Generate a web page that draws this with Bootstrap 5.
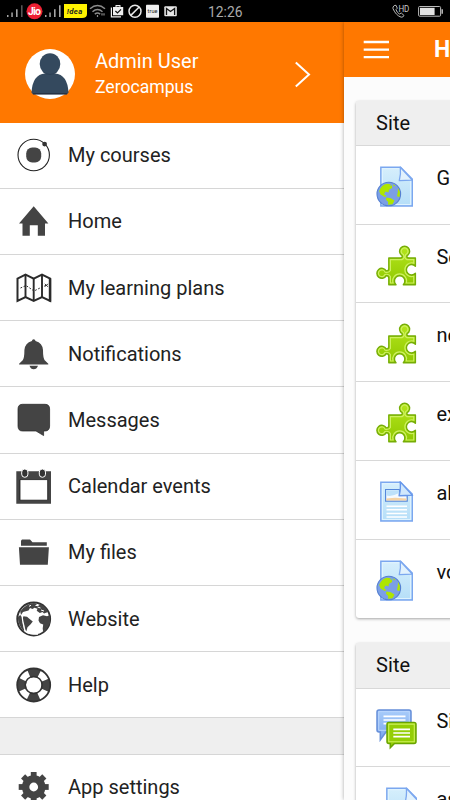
<!DOCTYPE html>
<html lang="en">
<head>
<meta charset="utf-8">
<meta name="viewport" content="width=device-width, initial-scale=1">
<title>Zerocampus</title>
<link href="https://cdn.jsdelivr.net/npm/bootstrap@5.3.0/dist/css/bootstrap.min.css" rel="stylesheet">
<style>
body{font-family:Roboto,"Liberation Sans",sans-serif;color:#222;width:450px;height:800px;line-height:1.2}
svg{display:block;flex:none}
svg text{font-family:Roboto,sans-serif}
.status{height:22px;background:#000}
.side{width:344px}
.profile{height:100.5px;background:#ff7800;padding:3px 32px 0 25px;gap:20px}
.profile-name{font-size:20px;line-height:26px}
.profile-site{font-size:17.6px;line-height:26px}
.menu-row{height:66.22px;border-bottom:1px solid #d6d6d6;padding:0 16px;gap:16px;font-size:20px;background:#fff}
.menu-gap{height:36.3px;background:#efefef;border-bottom:1px solid #d6d6d6}
.page-pane{width:106px;background:#fcfcfc;box-shadow:0 0 4px rgba(0,0,0,.35);z-index:1}
.topbar{height:55px;background:#ff7800;padding:1px 0 0 19px;gap:44px;font-size:23px}
.site-card{width:160px;margin:23.5px 0 0 12px;border-radius:3px;background:#fff;box-shadow:0 1px 3px rgba(0,0,0,.35)}
.site-card + .site-card{margin-top:25px}
.site-head{height:45.3px;background:#efefef;border-bottom:1px solid #d8d8d8;padding-left:20px;font-size:20px;letter-spacing:.1px;color:#111}
.site-row{height:78.75px;border-bottom:1px solid #d8d8d8;padding:20px 0 0 20px;gap:19.4px;font-size:20px;color:#111}
.site-row:last-child{border-bottom:0}
</style>
<script src="https://cdn.jsdelivr.net/npm/bootstrap@5.3.0/dist/js/bootstrap.bundle.min.js"></script>
</head>
<body class="overflow-hidden d-flex flex-column">
<svg width="0" height="0" class="position-absolute">
<defs>
<linearGradient id="gp" x2="0" y2="1"><stop stop-color="#b5e61d"/><stop offset="1" stop-color="#8fc800"/></linearGradient>
<linearGradient id="gf" x2="0" y2="1"><stop stop-color="#d6effc"/><stop offset="1" stop-color="#b5def8"/></linearGradient>
<linearGradient id="gb" x2="0" y2="1"><stop stop-color="#a9cdfb"/><stop offset="1" stop-color="#78a4ec"/></linearGradient>
<symbol id="sheet" viewBox="0 0 41 41">
<path d="M4.9 1.2H24.5L36.2 13V40H4.9Z" fill="url(#gf)" stroke="#7ba7ef" stroke-width="1.6"/>
<path d="M6.4 2.7H23L34.7 14.5V38.5H6.4Z" fill="none" stroke="#dff3fe" stroke-width="1.2"/>
<path d="M24.3 1.2L36.2 14.1L23.3 14.6Q25 8 24.3 1.2Z" fill="#e2f2fd" stroke="#7ba7ef" stroke-width="1.3" stroke-linejoin="round"/>
</symbol>
<symbol id="weblink" viewBox="0 0 41 41">
<use href="#sheet" width="41" height="41"/>
<circle cx="12.8" cy="28" r="11.8" fill="#7b9fe6" stroke="#5580d2" stroke-width="1.1"/>
<path d="M3.2 25Q5.5 18.5 11 17.7L14.8 18.2L13.5 20L16 19.3L16.2 22L13 23.8L12.5 26.5L9.5 25.4L8 28.2L10.5 30L8.7 31L4.5 28.5ZM10.5 31.5L14.8 32.3L18.5 34.5L16.5 38.2L12 38.8L12.2 36L9.8 33.5ZM22 22L24 26L23.6 31L21 30.3L21.8 26ZM17 18.2L19.4 19.7L17.8 20.6Z" fill="#aee600"/>
</symbol>
<symbol id="puzzle" viewBox="0 0 41 41">
<path d="M12.8 13H24.5Q27 12.6 26 10.5A5 5 0 1 1 31.2 10.5Q30.2 12.6 32.5 13H39.4V21.2A5.2 5.2 0 1 0 39.4 28.3V39.7H27.3A5.2 5.2 0 1 0 20 39.7H12.8V33Q12.4 30.3 10.2 30.8A5 5 0 1 1 10.2 25.8Q12.4 26.2 12.8 23.5Z" fill="url(#gp)" stroke="#76ad06" stroke-width="1.4" stroke-linejoin="round"/>
<path d="M14.4 14.6H26Q29.2 13.5 27.4 9.5A3.4 3.4 0 1 1 29.8 9.5Q28 13.5 31 14.6H37.8V18.1A6.9 6.9 0 1 0 37.8 31.3V38H30.2A6.9 6.9 0 1 0 17.1 38H14.4V31.5Q13 28.5 9 29.5A3.4 3.4 0 1 1 9 27.1Q13 28 14.4 25.5Z" fill="none" stroke="#cdf060" stroke-width="1.2"/>
</symbol>
<symbol id="article" viewBox="0 0 41 41">
<use href="#sheet" width="41" height="41"/>
<path d="M9.6 8.5H23.3V14.6H31.2V20.2H9.6Z" fill="#f4faff" stroke="#5588da" stroke-width="1.2"/>
<path d="M10.3 17.5L19 16.7L30.5 17.6V19.6H10.3Z" fill="#f5d3a5"/><path d="M10.3 9.2H23V12Q16 16 10.3 14.5Z" fill="#bde1fa"/>
<path d="M10.5 25.2H31M10.5 28.8H31M10.5 32.4H31M10.5 36H31" stroke="#fff" stroke-width="1.5"/>
<path d="M24.3 1.2L36.2 14.1L23.3 14.6Q25 8 24.3 1.2Z" fill="#d0e8fc" stroke="#6797ea" stroke-width="1.2"/>
</symbol>
<symbol id="forum" viewBox="0 0 41 41">
<path d="M3 1H33Q35 1 35 3V21Q35 23 33 23H10L4.3 31V23H3Q1 23 1 21V3Q1 1 3 1Z" fill="url(#gb)" stroke="#668fd9" stroke-width="1.5"/>
<path d="M2.7 2.6H33.3V21.3H2.7Z" fill="none" stroke="#b9d6fd" stroke-width="1"/>
<path d="M7.5 7.4H29.5M7.5 11H29.5M7.5 14.6H29.5" stroke="#fff" stroke-width="1.6"/>
<path d="M12.8 13.5H38Q40 13.5 40 15.5V32.4Q40 34.4 38 34.4H18.5L14.3 38.6V34.4H12.8Q11 34.4 11 32.4V15.5Q11 13.5 12.8 13.5Z" fill="#94ce05" stroke="#69a400" stroke-width="1.5"/>
<path d="M12.7 15.1H38.3V32.8H12.7Z" fill="none" stroke="#cdf15a" stroke-width="1.1"/>
<path d="M17.3 20.4H34M17.3 24H34M17.3 27.6H34" stroke="#fff" stroke-width="1.6"/>
</symbol>
</defs>
</svg>

<div class="status flex-shrink-0">
<svg width="450" height="22" viewBox="0 0 450 22">
<g fill="#a5a5a5"><path d="M7 15h1.5v2H7zM11.3 12.5h1.5V17h-1.5zM16 9.3h1.6V17H16zM45 15h1.5v2H45zM49.3 12.5h1.5V17h-1.5zM54 9.3h1.6V17H54zM59 5.3h1.6V17H59z"/><path d="M21 5.3h1.6V17H21z" fill="#555"/></g>
<circle cx="34.5" cy="11.3" r="8" fill="#ed2034"/><text x="28" y="15" font-size="10.5" font-weight="700" fill="#fff" textLength="13">Jio</text>
<path d="M64 4H87V14Q87 18 82 18H64Z" fill="#fff200"/><text x="66.8" y="13.7" font-size="7.8" font-weight="700" font-style="italic" fill="#222" textLength="15.5">!dea</text>
<g fill="none" stroke="#8c8c8c" stroke-width="1.5"><path d="M90 8.7Q97.5 2.2 105 8.7M92.5 11.7Q97.5 7.3 102.5 11.7M94.8 14.2Q97.5 12 100.2 14.2"/><path d="M97.5 15v2M102 13.2v2.3M104 13.2v2.3" stroke-width="1.2"/></g>
<path d="M111.4 7.5V16.8H121" fill="none" stroke="#eee" stroke-width="1.2"/><path d="M113 7H115.5V5H120.5V7H123.2V15.2H113ZM116.5 6.2V7H119.5V6.2Z" fill="#eee" fill-rule="evenodd"/><path d="M115.4 11L117.5 13L121 9.3" stroke="#111" stroke-width="1.2" fill="none"/>
<circle cx="135" cy="11.2" r="6" fill="none" stroke="#e8e8e8" stroke-width="1.5"/><path d="M130.8 15.4L139.2 7" stroke="#e8e8e8" stroke-width="1.5"/>
<rect x="146" y="4.8" width="13" height="13" rx=".7" fill="#eee"/><text x="147.5" y="12.8" font-size="5.5" fill="#222" textLength="10">true</text>
<rect x="164.3" y="6.2" width="12.5" height="10" rx="1" fill="#e8e8e8"/><path d="M166.5 15V8.5L170.5 11.5L174.6 8.5V15" fill="none" stroke="#151515" stroke-width="1.3"/>
<text x="208" y="16.6" font-size="13.8" fill="#aaa" textLength="34.5" lengthAdjust="spacingAndGlyphs">12:26</text>
<path d="M394.2 5.6Q392.4 7 393 8.7Q396 15.5 401.2 17.2Q403 17.5 404 15.5L401.3 13L399.3 14Q396.7 12.2 396 9.6L397.3 8.2L396 5.3Z" fill="none" stroke="#bbb" stroke-width="1"/>
<text x="398.4" y="11.6" font-size="8.6" fill="#c8c8c8" textLength="11" lengthAdjust="spacingAndGlyphs">HD</text>
<rect x="418.6" y="6.5" width="22" height="9.7" rx="1" fill="none" stroke="#bbb" stroke-width="1"/><path d="M420 7.8H434.6V15H420Z" fill="#e2e2e2"/><path d="M442.2 9.2V13.7" stroke="#bbb" stroke-width="1.5"/>
</svg>
</div>

<div class="d-flex flex-grow-1 overflow-hidden">
<aside class="side flex-shrink-0">
<div class="profile d-flex align-items-center text-white">
<svg width="50" height="50" viewBox="0 0 50 50"><circle cx="25" cy="25" r="25" fill="#fff"/><ellipse cx="25" cy="15" rx="10.3" ry="10.8" fill="#34495e"/><path d="M6.5 43.5Q7.5 25.5 20 24.5H30Q42.5 25.5 43.5 43.5L42 45.5H8Z" fill="#34495e"/><path d="M8 44.8H42" stroke="#202b3d" stroke-width="1.1"/><path d="M18.2 23Q25 28 31.8 23" fill="none" stroke="#27394c" stroke-width=".6"/></svg>
<div class="flex-grow-1"><div class="profile-name">Admin User</div><div class="profile-site">Zerocampus</div></div>
<svg width="18" height="28" viewBox="0 0 18 28"><path d="M1.8 2.5L15 14.5L1.8 26.5" fill="none" stroke="#fff" stroke-width="2"/></svg>
</div>
<nav>
<div class="menu-row d-flex align-items-center"><svg width="36" height="36"><circle cx="17.7" cy="18" r="15.7" fill="none" stroke="#222" stroke-width="1.1"/><rect x="10.2" y="10.4" width="15" height="15.2" rx="6" fill="#444"/><circle cx="28.6" cy="7.1" r="2.4" fill="#333"/></svg><span>My courses</span></div>
<div class="menu-row d-flex align-items-center"><svg width="36" height="36"><path d="M17.7 3.3L32.4 20.6H29V32.8H21.8V22.2H13.8V32.8H6.5V20.6H3Z" fill="#444"/></svg><span>Home</span></div>
<div class="menu-row d-flex align-items-center"><svg width="36" height="36" fill="none" stroke="#2b2b2b"><path d="M1.5 8.7L9.5 4.7L17.7 8.7L26 4.7L34.2 8.7V31L26 27L17.7 31L9.5 27L1.5 31Z" stroke-width="2"/><path d="M9.5 4.7V27M17.7 8.7V31M26 4.7V27" stroke-width="1.9"/><path d="M34 8.5V31.5" stroke-width="2.4"/><path d="M4.5 18L10 15.5L18 21L26 17L32 14.5" stroke-width="1" stroke-dasharray="1.8 1.6"/><path d="M28.8 13.8l3 3m0-3l-3 3" stroke-width=".9"/></svg><span>My learning plans</span></div>
<div class="menu-row d-flex align-items-center"><svg width="36" height="36" fill="#444"><path d="M17.7 3.3Q19.3 3.3 19.5 5Q26.5 7 27 14Q27 22 28.7 24.2L32.3 27.7V28.4H3.1V27.7L6.7 24.2Q8.4 22 8.4 14Q9 7 15.9 5Q16.1 3.3 17.7 3.3ZM13.5 29.8H22Q20.7 33.3 17.7 33.3T13.5 29.8Z"/></svg><span>Notifications</span></div>
<div class="menu-row d-flex align-items-center"><svg width="36" height="36"><path d="M6.5 2.3H29Q33.6 2.3 33.6 7V24Q33.6 29 29 29H27.6V33.6L20 29H6.5Q2 29 2 24V7Q2 2.3 6.5 2.3Z" fill="#444" stroke="#222" stroke-width=".7"/></svg><span>Messages</span></div>
<div class="menu-row d-flex align-items-center"><svg width="36" height="36"><path d="M.3 3.2H35V35.8H.3ZM4 11.6V32.2H31.7V11.6Z" fill="#444" fill-rule="evenodd"/><path d="M4 11.6H31.7V32.2H4Z" fill="none" stroke="#151515" stroke-width=".8"/><rect x="5.7" y="1" width="6.2" height="8.3" rx="3.1" fill="#333" stroke="#fff" stroke-width="1"/><rect x="23.3" y="1" width="6.2" height="8.3" rx="3.1" fill="#333" stroke="#fff" stroke-width="1"/></svg><span>Calendar events</span></div>
<div class="menu-row d-flex align-items-center"><svg width="36" height="36" fill="#444"><path d="M5 11V6.8L6 5.6H14L16.5 8.3H30.8V11.8H5ZM2.9 13.3H32.9L31.8 30.7H4Z"/></svg><span>My files</span></div>
<div class="menu-row d-flex align-items-center"><svg width="36" height="36"><circle cx="17.7" cy="18" r="16.4" fill="#fff" stroke="#333" stroke-width="2"/><path d="M4.2 10.5Q10 2.5 18 2L21 3L19 5H22L24.5 3.3Q30 6 32 11L28 12.5L26.5 11L23.8 12L20.7 9.7L21.5 7.8L18.5 6.7L16.5 8L14 7L12.5 9.5L7 11L5 14ZM7.3 15.2L11 15.7L13 17.4L16.8 20.5L14.4 23.5L11.5 26.3L10.2 30.8L8.4 27.2L8 23.5L6.4 20ZM23 16L27 14.2L31 15.2L34 14L34 22L30 29L27.2 31.5L26.7 27.5L27.2 23.5L24 22.2L22.5 19.5ZM1.8 16L4.3 14L5.7 16L6.8 22L8.6 31Q2 25 1.8 16Z" fill="#444"/><path d="M6.8 15Q5.7 16 7.4 23L9 30Q13 33.4 22 33" fill="none" stroke="#fff" stroke-width="1.3"/><path d="M13 5.3l2-1M21.5 6l3 1M25 9l3 1" stroke="#fff" stroke-width="1"/></svg><span>Website</span></div>
<div class="menu-row d-flex align-items-center"><svg width="36" height="36"><circle cx="17.7" cy="18" r="12.2" fill="none" stroke="#444" stroke-width="9" stroke-dasharray="10.5 8.664" stroke-dashoffset="5.25"/><circle cx="17.7" cy="18" r="16.5" fill="none" stroke="#333" stroke-width="1.8"/><circle cx="17.7" cy="18" r="8.5" fill="none" stroke="#333" stroke-width="1.6"/></svg><span>Help</span></div>
<div class="menu-gap"></div>
<div class="menu-row d-flex align-items-center"><svg width="36" height="36"><g fill="#444"><circle cx="17.7" cy="18" r="11.8"/><path id="cog" d="M14.8 3H20.6V33H14.8Z"/><use href="#cog" transform="rotate(45 17.7 18)"/><use href="#cog" transform="rotate(90 17.7 18)"/><use href="#cog" transform="rotate(135 17.7 18)"/></g><circle cx="17.7" cy="18" r="4.4" fill="#fff"/></svg><span>App settings</span></div>
</nav>
</aside>

<main class="page-pane flex-shrink-0 position-relative overflow-visible">
<div class="topbar d-flex align-items-center text-white fw-bold">
<svg width="27" height="20" viewBox="0 0 27 20"><path d="M.7 2H26M.7 9.6H26M.7 17.2H26" stroke="#fff" stroke-width="2.3"/></svg><span>Home</span>
</div>
<section class="site-card">
<div class="site-head d-flex align-items-center">Site</div>
<div class="site-row d-flex"><svg width="41" height="41"><use href="#weblink"/></svg><span>Glossary</span></div>
<div class="site-row d-flex"><svg width="41" height="41"><use href="#puzzle"/></svg><span>Select</span></div>
<div class="site-row d-flex"><svg width="41" height="41"><use href="#puzzle"/></svg><span>new</span></div>
<div class="site-row d-flex"><svg width="41" height="41"><use href="#puzzle"/></svg><span>example</span></div>
<div class="site-row d-flex"><svg width="41" height="41"><use href="#article"/></svg><span>all</span></div>
<div class="site-row d-flex"><svg width="41" height="41"><use href="#weblink"/></svg><span>vocabulary</span></div>
</section>
<section class="site-card">
<div class="site-head d-flex align-items-center">Site</div>
<div class="site-row d-flex"><svg width="41" height="41"><use href="#forum"/></svg><span>Site</span></div>
<div class="site-row d-flex"><svg width="41" height="41"><use href="#sheet" x="6"/></svg><span>assignment</span></div>
</section>
</main>
</div>
</body>
</html>
